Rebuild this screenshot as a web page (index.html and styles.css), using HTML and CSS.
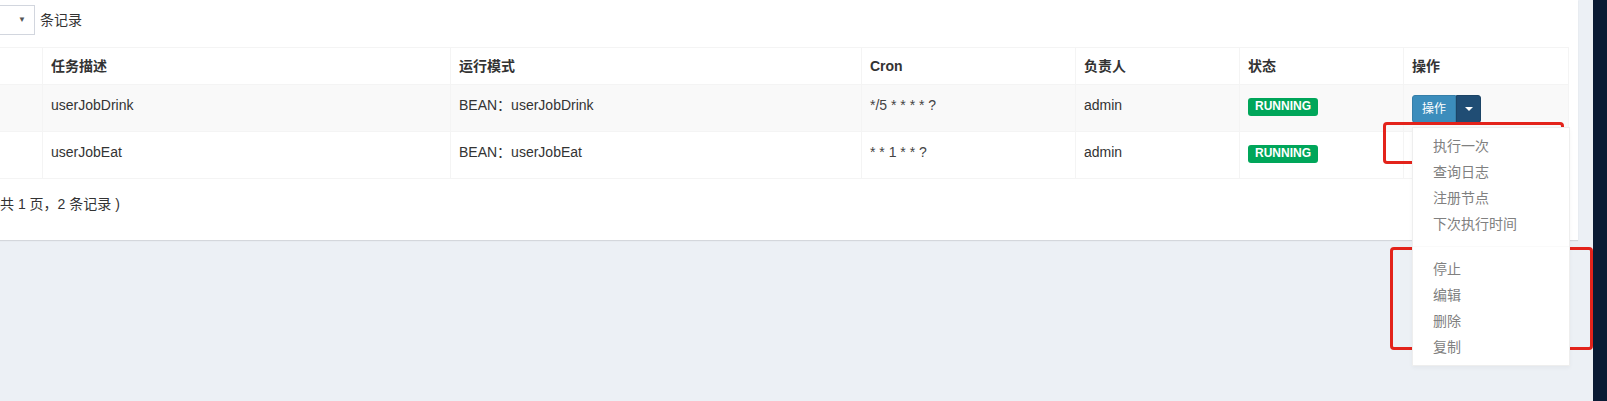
FILE: index.html
```html
<!DOCTYPE html>
<html lang="zh-CN">

<head>
    <meta charset="UTF-8">
    <title>任务管理</title>
    <link rel="stylesheet" href="styles.css">
</head>

<body>
    <main class="content">
        <div class="box">
            <div class="length">
                <div class="select"><span class="arrow">▼</span></div>
                <span>条记录</span>
            </div>

            <table>
                <colgroup>
                    <col class="w-id">
                    <col class="w-desc">
                    <col class="w-mode">
                    <col class="w-cron">
                    <col class="w-owner">
                    <col class="w-state">
                    <col class="w-op">
                </colgroup>
                <thead>
                    <tr>
                        <th></th>
                        <th>任务描述</th>
                        <th>运行模式</th>
                        <th>Cron</th>
                        <th>负责人</th>
                        <th>状态</th>
                        <th>操作</th>
                    </tr>
                </thead>
                <tbody>
                    <tr class="odd">
                        <td></td>
                        <td>userJobDrink</td>
                        <td>BEAN：userJobDrink</td>
                        <td class="cron">*/5 * * * * ?</td>
                        <td>admin</td>
                        <td><span class="label">RUNNING</span></td>
                        <td>
                            <div class="btn-group">
                                <button class="btn">操作</button>
                                <button class="btn caret-btn"><span class="caret"></span></button>
                                <ul class="menu">
                                    <li>执行一次</li>
                                    <li>查询日志</li>
                                    <li>注册节点</li>
                                    <li>下次执行时间</li>
                                    <li class="divider"></li>
                                    <li>停止</li>
                                    <li>编辑</li>
                                    <li>删除</li>
                                    <li>复制</li>
                                </ul>
                            </div>
                        </td>
                    </tr>
                    <tr>
                        <td></td>
                        <td>userJobEat</td>
                        <td>BEAN：userJobEat</td>
                        <td class="cron">* * 1 * * ?</td>
                        <td>admin</td>
                        <td><span class="label">RUNNING</span></td>
                        <td></td>
                    </tr>
                </tbody>
            </table>

            <div class="info">共 1 页，2 条记录 )</div>
        </div>
    </main>
    <aside class="edge"></aside>

    <!-- markering i skærmbilledet -->
    <div class="mark mark-one"></div>
    <div class="mark mark-two"></div>
</body>

</html>
```

FILE: styles.css
```css
body {
    margin: 0;
    height: 401px;
    overflow: hidden;
    display: flex;
    position: relative;
    background-color: #ecf0f5;
    font-family: "Liberation Sans", "Noto Sans CJK SC", sans-serif;
    font-size: 14px;
    line-height: 20px;
    color: #333;
}

.content {
    flex: 1;
    min-width: 0;
}

.edge {
    width: 14px;
    background-color: #0a1b34;
}

.box {
    margin: 0 15px 0 -60px;
    padding: 5px 10px 26px 10px;
    background-color: white;
    box-shadow: 0 1px 1px rgba(0, 0, 0, 0.1);
}

.length {
    display: flex;
    align-items: center;
    gap: 5px;
    height: 30px;
}

.select {
    box-sizing: border-box;
    width: 85px;
    height: 30px;
    padding: 0 8px;
    border: 1px solid #d2d6de;
    display: flex;
    align-items: center;
    justify-content: flex-end;
}

.arrow {
    font-size: 8px;
    color: #555;
}

table {
    margin-top: 12px;
    width: 1618px;
    table-layout: fixed;
    border-collapse: collapse;
}

.w-id { width: 92px; }
.w-desc { width: 408px; }
.w-mode { width: 411px; }
.w-cron { width: 214px; }
.w-owner { width: 164px; }
.w-state { width: 164px; }
.w-op { width: 165px; }

th,
td {
    border: 1px solid #f4f4f4;
    text-align: left;
    vertical-align: top;
    white-space: nowrap;
}

th {
    padding: 8px;
    font-weight: bold;
}

td {
    padding: 10px 8px 8px 8px;
    height: 28px;
}

tr.odd {
    background-color: #f9f9f9;
}

.cron {
    color: #444;
}

.label {
    display: inline-block;
    margin-top: 2px;
    padding: 1px 7px 2px 7px;
    line-height: 15px;
    font-size: 12px;
    font-weight: bold;
    color: white;
    background-color: #00a65a;
    border-radius: 3px;
}

.btn-group {
    position: relative;
    display: inline-flex;
}

.btn {
    box-sizing: border-box;
    height: 28px;
    margin: 0;
    padding: 5px 9px;
    font-family: inherit;
    font-size: 12px;
    line-height: 16px;
    color: white;
    background-color: #3c8dbc;
    border: 1px solid #367fa9;
    border-radius: 3px 0 0 3px;
}

.caret-btn {
    width: 25px;
    padding: 0;
    display: flex;
    align-items: center;
    justify-content: center;
    background-color: #204d74;
    border-color: #1c4466;
    border-radius: 0 3px 3px 0;
}

.caret {
    width: 0;
    height: 0;
    border-top: 4px solid white;
    border-left: 4px solid transparent;
    border-right: 4px solid transparent;
}

.menu {
    position: absolute;
    top: 100%;
    left: 0;
    z-index: 1000;
    width: 156px;
    margin: 4px 0 0 0;
    padding: 5px 0;
    list-style: none;
    background-color: white;
    border: 1px solid #eeeeee;
    box-shadow: 0 2px 4px rgba(0, 0, 0, 0.04);
}

.menu li {
    padding: 3px 20px;
    line-height: 20px;
    color: #808080;
}

.menu li.divider {
    height: 1px;
    margin: 9px 0;
    padding: 0;
    background-color: #fafafa;
}

.info {
    margin-top: 15px;
    padding-left: 50px;
}

.mark {
    position: absolute;
    box-sizing: border-box;
    border: 3px solid #e3231b;
    border-radius: 4px;
}

.mark-one {
    left: 1383px;
    top: 122px;
    width: 181px;
    height: 42px;
}

.mark-two {
    left: 1390px;
    top: 247px;
    width: 203px;
    height: 103px;
}
```
